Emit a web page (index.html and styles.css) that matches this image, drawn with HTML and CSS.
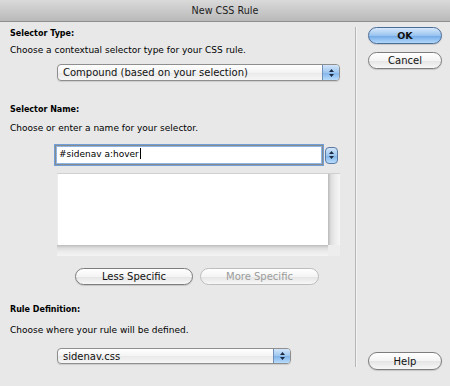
FILE: index.html
```html
<!DOCTYPE html>
<html lang="en">
<head>
  <meta charset="UTF-8">
  <title>New CSS Rule</title>
  <link rel="stylesheet" href="styles.css">
</head>
<body>
  <div class="window">
    <div class="titlebar">New CSS Rule</div>

    <div class="dialog">
      <div class="main">
        <div class="label">Selector Type:</div>
        <div class="desc">Choose a contextual selector type for your CSS rule.</div>
        <div class="popup popup-type">
          <span class="popup-text">Compound (based on your selection)</span>
          <span class="stepper">
            <svg width="7" height="10" viewBox="0 0 7 10"><path d="M3.5 1 L6 4 L1 4 Z M3.5 9 L6 6 L1 6 Z" fill="#1b2a44"/></svg>
          </span>
        </div>

        <div class="label label-name">Selector Name:</div>
        <div class="desc desc-name">Choose or enter a name for your selector.</div>
        <div class="name-row">
          <div class="field">#sidenav a:hover<span class="caret"></span></div>
          <span class="stepper stepper-round">
            <svg width="7" height="10" viewBox="0 0 7 10"><path d="M3.5 1 L6 4 L1 4 Z M3.5 9 L6 6 L1 6 Z" fill="#1b2a44"/></svg>
          </span>
        </div>
        <div class="listbox">
          <div class="list-area"></div>
          <div class="vscroll"></div>
          <div class="hscroll"></div>
          <div class="corner"></div>
        </div>
        <div class="spec-row">
          <button class="btn btn-less">Less Specific</button>
          <button class="btn btn-more" disabled>More Specific</button>
        </div>

        <div class="label label-rule">Rule Definition:</div>
        <div class="desc desc-rule">Choose where your rule will be defined.</div>
        <div class="popup popup-file">
          <span class="popup-text">sidenav.css</span>
          <span class="stepper">
            <svg width="7" height="10" viewBox="0 0 7 10"><path d="M3.5 1 L6 4 L1 4 Z M3.5 9 L6 6 L1 6 Z" fill="#1b2a44"/></svg>
          </span>
        </div>
      </div>

      <div class="sep"></div>

      <div class="actions">
        <button class="btn btn-ok">OK</button>
        <button class="btn btn-cancel">Cancel</button>
        <button class="btn btn-help">Help</button>
      </div>
    </div>
  </div>
</body>
</html>
```

FILE: styles.css
```css
body {
  margin: 0;
  font-family: 'DejaVu Sans', sans-serif;
  background-color: #e8e8e8;
  color: #000;
}

.window {
  width: 450px;
  height: 386px;
  display: flex;
  flex-direction: column;
  overflow: hidden;
}

.titlebar {
  height: 21px;
  line-height: 21px;
  text-align: center;
  font-size: 9.6px;
  color: #1c1c1c;
  background: linear-gradient(#dadada, #b9b9b9);
  border-bottom: 1px solid #8e8e8e;
}

.dialog {
  flex: 1;
  display: flex;
}

.main {
  width: 345px;
  padding-left: 10px;
  display: flex;
  flex-direction: column;
}

.label {
  font-size: 8px;
  font-weight: bold;
  line-height: 14px;
  margin-top: 5px;
}

.desc {
  font-size: 9px;
  line-height: 14px;
  margin-top: 2px;
}

.label-name { margin-top: 22px; }
.desc-name { margin-top: 4px; }
.label-rule { margin-top: 18px; }
.desc-rule { margin-top: 6px; }

/* popup menus */
.popup {
  box-sizing: border-box;
  display: flex;
  align-items: center;
  margin-left: 47px;
  border: 1px solid #8e8e8e;
  border-radius: 4px;
  background: linear-gradient(#ffffff, #f3f3f3 50%, #e9e9e9 51%, #f6f6f6);
  box-shadow: 0 1px 1px rgba(0, 0, 0, 0.12);
  overflow: hidden;
}

.popup-type {
  width: 283px;
  height: 17px;
  margin-top: 7px;
}

.popup-file {
  width: 234px;
  height: 16px;
  margin-top: 11px;
}

.popup-text {
  flex: 1;
  padding-left: 5px;
  font-size: 10px;
  color: #111;
}

.stepper {
  width: 16px;
  align-self: stretch;
  display: flex;
  align-items: center;
  justify-content: center;
  border-left: 1px solid #6f8fb8;
  background: linear-gradient(#d2e5fa, #9ec6ef 50%, #7fb3ea 51%, #b9dcfb);
}

/* selector name field */
.name-row {
  display: flex;
  align-items: center;
  margin-top: 10px;
  margin-left: 45px;
}

.field {
  box-sizing: border-box;
  width: 268px;
  height: 20px;
  padding-left: 3px;
  font-size: 9px;
  line-height: 16px;
  background: #fff;
  border: 1px solid #8a8a8a;
  box-shadow: 0 0 0 1px #6f9fd8, inset 0 0 0 1px #8db6e6;
}

.caret {
  display: inline-block;
  width: 1px;
  height: 11px;
  margin-left: 1px;
  vertical-align: -2px;
  background: #000;
}

.stepper-round {
  box-sizing: border-box;
  width: 13px;
  height: 17px;
  margin-left: 2px;
  border: 1px solid #5b7aa6;
  border-radius: 4px;
  align-self: auto;
}

/* list box */
.listbox {
  box-sizing: border-box;
  display: grid;
  grid-template-columns: 1fr 12px;
  grid-template-rows: 1fr 11px;
  width: 283px;
  height: 83px;
  margin-top: 8px;
  margin-left: 47px;
  border-top: 1px solid #d0d0d0;
  background: #ececec;
}

.list-area {
  background: #fff;
  margin-left: 1px;
}

.vscroll {
  background: linear-gradient(90deg, #b9b9b9, #dedede 3px, #ececec 60%, #f6f6f6);
}

.hscroll {
  background: linear-gradient(#bcbcbc, #dedede 3px, #ececec 60%, #f4f4f4);
}

.corner {
  background: #ededed;
}

/* buttons */
.btn {
  box-sizing: border-box;
  height: 17px;
  padding: 0;
  font-family: 'DejaVu Sans', sans-serif;
  font-size: 10px;
  color: #111;
  border: 1px solid #7d7d7d;
  border-radius: 9px;
  background: linear-gradient(#ffffff, #f4f4f4 50%, #e4e4e4 51%, #f7f7f7);
  box-shadow: 0 1px 1px rgba(0, 0, 0, 0.15);
}

.spec-row {
  display: flex;
  gap: 7px;
  margin-top: 12px;
  margin-left: 65px;
}

.btn-less { width: 118px; }

.btn-more {
  width: 119px;
  color: #9c9c9c;
  border-color: #bdbdbd;
  box-shadow: none;
}

.sep {
  width: 1px;
  margin: 5px 0 19px;
  background: #b6b6b6;
  box-shadow: 1px 0 0 #f3f3f3;
}

.actions {
  display: flex;
  flex-direction: column;
  padding: 5px 0 16px 12px;
}

.actions .btn { width: 74px; }

.btn-ok {
  font-weight: bold;
  font-size: 9.5px;
  border-color: #4a6c98;
  background: linear-gradient(#d6e8fb, #9ac4ef 50%, #6fa8e6 51%, #b3d8fa);
}

.btn-cancel { margin-top: 8px; }

.btn-help {
  margin-top: auto;
  height: 18px;
}
```
